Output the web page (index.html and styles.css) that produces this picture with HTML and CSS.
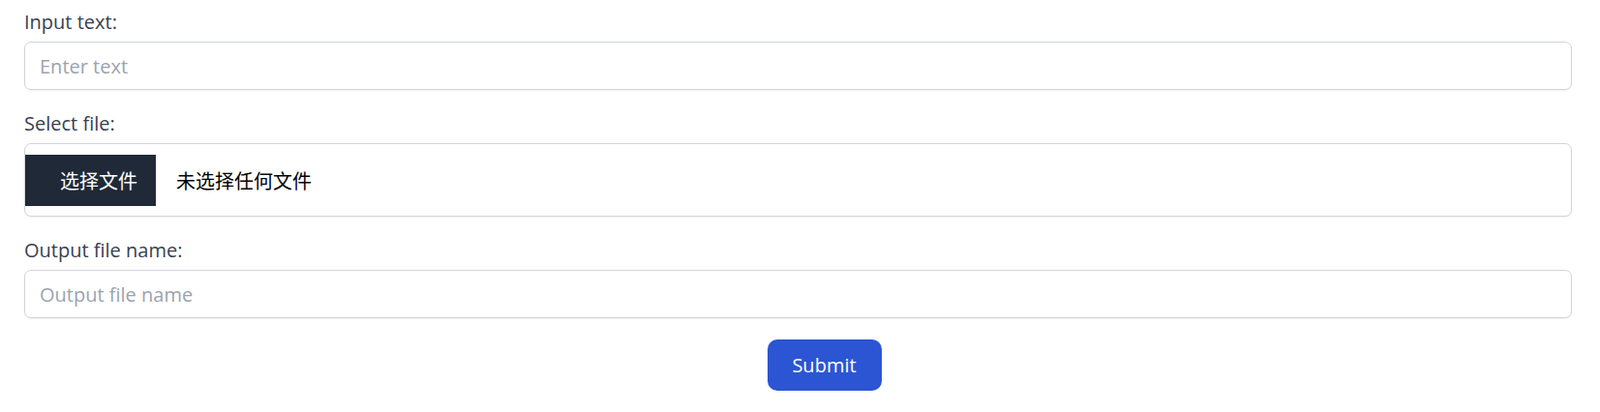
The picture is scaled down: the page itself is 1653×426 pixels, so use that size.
FILE: index.html
```html
<!DOCTYPE html>
<html lang="en">
<head>
<meta charset="utf-8">
<title>Form</title>
<link rel="stylesheet" href="styles.css">
</head>
<body>
<form class="form">
  <div class="field">
    <label class="label" for="input-text">Input text:</label>
    <input class="input" id="input-text" type="text" placeholder="Enter text">
  </div>
  <div class="field">
    <label class="label">Select file:</label>
    <div class="file-box">
      <span class="file-btn">选择文件</span>
      <span class="file-name">未选择任何文件</span>
    </div>
  </div>
  <div class="field">
    <label class="label" for="output-name">Output file name:</label>
    <input class="input" id="output-name" type="text" placeholder="Output file name">
  </div>
  <div class="actions">
    <button class="submit" type="button">Submit</button>
  </div>
</form>
</body>
</html>
```
FILE: styles.css
```css
* { box-sizing: border-box; }
html, body { margin: 0; padding: 0; background: #ffffff; }
body {
  font-family: "Open Sans", "Noto Sans CJK SC", sans-serif;
  font-size: 20px;
  line-height: 30px;
  color: #374151;
}
.form {
  padding: 8px 29px 0 25px;
}
.field {
  margin-bottom: 20px;
}
.label {
  display: block;
  height: 30px;
  line-height: 30px;
  margin-bottom: 5px;
  color: #374151;
}
.input {
  display: block;
  width: 100%;
  height: 50px;
  padding: 9px 15px;
  border: 1px solid #d1d5db;
  border-radius: 7px;
  box-shadow: 0 1px 2px rgba(0, 0, 0, 0.06);
  font-family: inherit;
  font-size: 20px;
  line-height: 30px;
  color: #111827;
  background: #fff;
  outline: none;
}
.input::placeholder { color: #9ca3af; }
.file-box {
  display: flex;
  align-items: center;
  height: 76px;
  padding: 11px 0 10px 0;
  border: 1px solid #d1d5db;
  border-radius: 7px;
  box-shadow: 0 1px 2px rgba(0, 0, 0, 0.06);
  background: #fff;
}
.file-btn {
  display: flex;
  align-items: center;
  height: 53px;
  padding: 0 19px 0 36px;
  background: #1f2937;
  color: #ffffff;
  font-family: "Noto Sans CJK SC", sans-serif;
  font-size: 20px;
  line-height: 30px;
}
.file-name {
  margin-left: 21px;
  color: #000000;
  font-family: "Noto Sans CJK SC", sans-serif;
  font-size: 20px;
  line-height: 30px;
}
.actions {
  display: flex;
  justify-content: center;
  padding-left: 54px;
  padding-top: 2px;
}
.submit {
  height: 53px;
  width: 118px;
  padding: 0;
  border: none;
  border-radius: 10px;
  background: #2c55d3;
  color: #ffffff;
  font-family: inherit;
  font-size: 20px;
  font-weight: 500;
  cursor: pointer;
}
```
